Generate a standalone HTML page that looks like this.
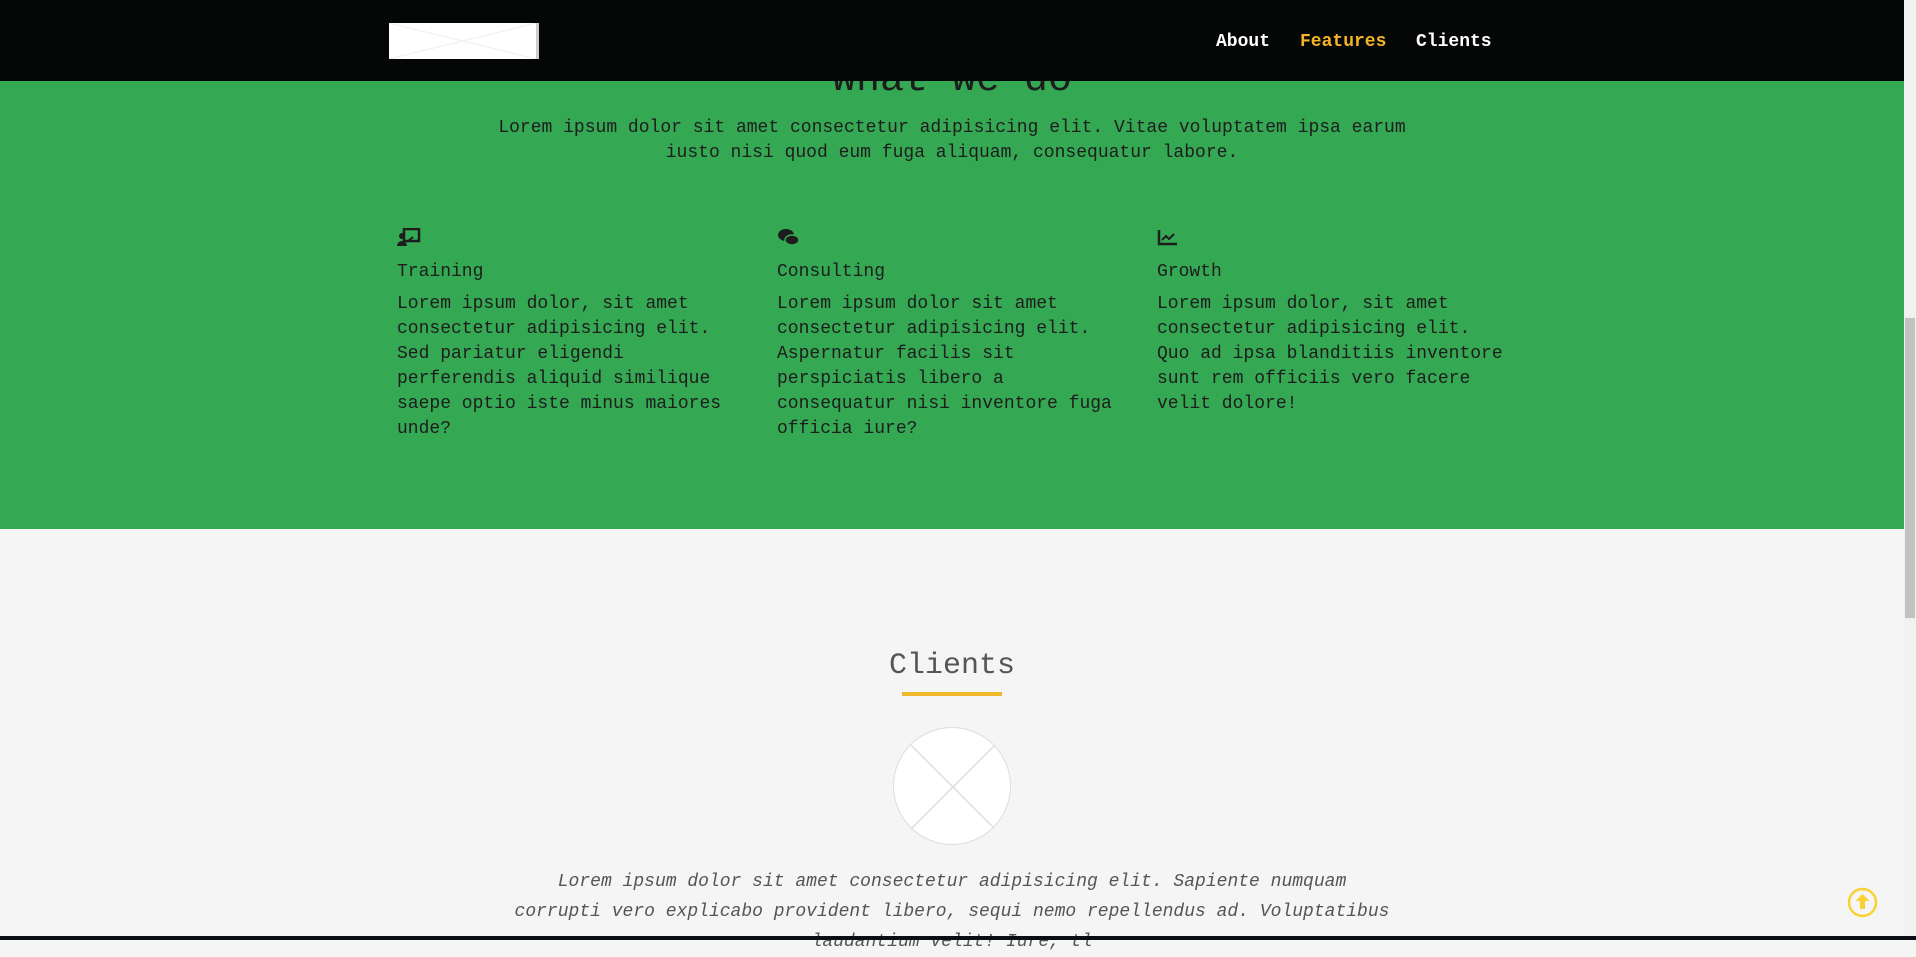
<!DOCTYPE html>
<html><head><meta charset="utf-8"><style>
*{margin:0;padding:0;box-sizing:border-box}
html,body{width:1916px;height:940px;overflow:hidden;background:#f5f5f5;font-family:"Liberation Mono","DejaVu Sans Mono",monospace}
.nav{position:absolute;left:0;top:0;width:1904px;height:81px;background:#050606;z-index:2}
.logo{position:absolute;left:389px;top:23px;width:150px;height:36px;background:#fff;border-right:3px solid #ccc}
.nav a{position:absolute;top:32px;font-size:18px;font-weight:bold;color:#fff;text-decoration:none}
.green{position:absolute;left:0;top:0;width:1904px;height:529px;background:#35a853;color:#1d1d1d}
h1{position:absolute;width:1904px;text-align:center;top:58px;font-size:40px;font-weight:normal}
.lead{position:absolute;width:1904px;text-align:center;top:116px;font-size:18px;line-height:25px}
.col{position:absolute;top:228px;font-size:18px;line-height:25px}
.col svg{display:block}
.col h3{font-weight:normal;font-size:18px;margin-top:12px;margin-bottom:7px;line-height:25px}
.clients{position:absolute;width:1904px;text-align:center;top:649px;font-size:30px;color:#555}
.ul{position:absolute;left:902px;top:692px;width:100px;height:4px;background:#f0b82a}
.circ{position:absolute;left:893px;top:727px;width:118px;height:118px;border-radius:50%;background:#fff;border:1px solid #ddd;overflow:hidden}
.quote{position:absolute;width:1904px;text-align:center;top:867px;font-size:18px;line-height:30px;font-style:italic;color:#555}
.sb{position:absolute;left:1904px;top:0;width:12px;height:940px;background:#f1f1f1}
.th{position:absolute;left:1905px;top:318px;width:10px;height:300px;background:#c1c1c1}
.bot{position:absolute;left:0;top:936px;width:1916px;height:4px;background:#0a0d14}
</style></head><body>
<div class="green">
<h1>What we do</h1>
<div class="lead">Lorem ipsum dolor sit amet consectetur adipisicing elit. Vitae voluptatem ipsa earum<br>iusto nisi quod eum fuga aliquam, consequatur labore.</div>
<div class="col" style="left:397px"><svg width="24" height="20" viewBox="0 0 24 20"><rect x="7" y="1" width="15" height="12" fill="none" stroke="#1d1d1d" stroke-width="2.5"/><circle cx="5" cy="8" r="3" fill="#1d1d1d"/><path d="M0 18a5 5 0 0110 0z" fill="#1d1d1d"/><path d="M10 14l6-5" stroke="#1d1d1d" stroke-width="2"/></svg><h3>Training</h3>Lorem ipsum dolor, sit amet<br>consectetur adipisicing elit.<br>Sed pariatur eligendi<br>perferendis aliquid similique<br>saepe optio iste minus maiores<br>unde?</div>
<div class="col" style="left:777px"><svg width="24" height="20" viewBox="0 0 24 20"><ellipse cx="9" cy="7" rx="8" ry="6" fill="#1d1d1d"/><ellipse cx="15" cy="12" rx="7" ry="5" fill="#1d1d1d" stroke="#35a853" stroke-width="1.5"/></svg><h3>Consulting</h3>Lorem ipsum dolor sit amet<br>consectetur adipisicing elit.<br>Aspernatur facilis sit<br>perspiciatis libero a<br>consequatur nisi inventore fuga<br>officia iure?</div>
<div class="col" style="left:1157px"><svg width="24" height="20" viewBox="0 0 24 20"><path d="M2 2v14h18" fill="none" stroke="#1d1d1d" stroke-width="2.5"/><path d="M5 12l4-4 3 3 5-5" fill="none" stroke="#1d1d1d" stroke-width="2"/></svg><h3>Growth</h3>Lorem ipsum dolor, sit amet<br>consectetur adipisicing elit.<br>Quo ad ipsa blanditiis inventore<br>sunt rem officiis vero facere<br>velit dolore!</div>
</div>
<div class="nav"><div class="logo"><svg width="147" height="36"><path d="M0 0L147 36M147 0L0 36" stroke="#eee"/></svg></div>
<a style="left:1216px">About</a><a style="left:1300px;color:#f5b526">Features</a><a style="left:1416px">Clients</a></div>
<div class="clients">Clients</div><div class="ul"></div>
<div class="circ"><svg width="118" height="118"><path d="M17 17L101 101M101 17L17 101" stroke="#ddd" stroke-width="1.5"/></svg></div>
<div class="quote">Lorem ipsum dolor sit amet consectetur adipisicing elit. Sapiente numquam<br>corrupti vero explicabo provident libero, sequi nemo repellendus ad. Voluptatibus<br>laudantium velit! Iure, tl</div>
<svg style="position:absolute;left:1847px;top:887px" width="31" height="31" viewBox="0 0 31 31"><circle cx="15.5" cy="15.5" r="13.5" fill="none" stroke="#f7d230" stroke-width="2.5"/><path d="M15.5 7l7 7h-4.5v8h-5v-8h-4.5z" fill="#f7d230"/></svg>
<div class="sb"></div><div class="th"></div>
<div class="bot"></div>
</body></html>
